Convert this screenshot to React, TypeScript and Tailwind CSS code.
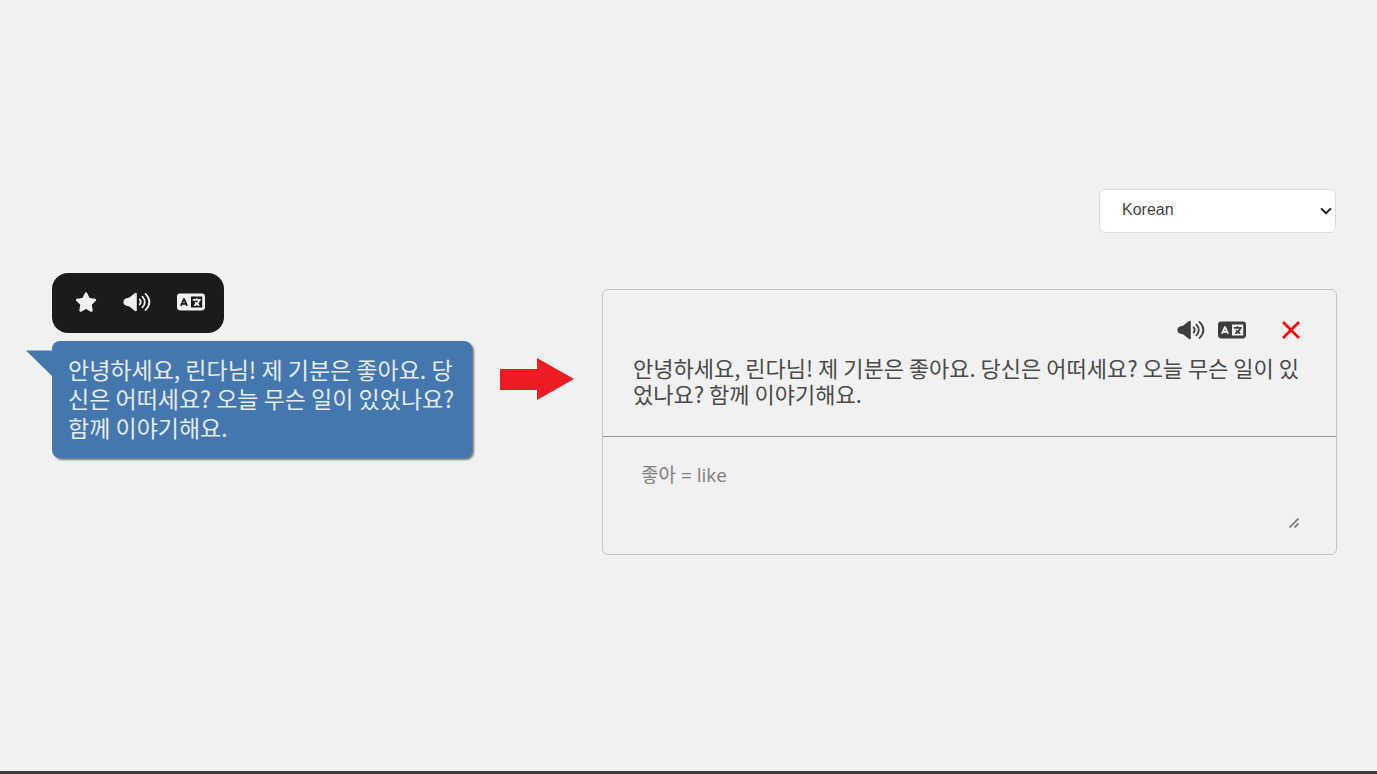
import { useState } from 'react';
import { FaLanguage, FaStar } from 'react-icons/fa6';

const message =
  '안녕하세요, 린다님! 제 기분은 좋아요. 당신은 어떠세요? 오늘 무슨 일이 있었나요? 함께 이야기해요.';

const languages = ['Korean', 'English', 'Japanese', 'Spanish'];

function SpeakerIcon() {
  return (
    <svg viewBox="0 0 28 20" className="h-5 w-7" fill="none" stroke="currentColor" strokeLinecap="round" aria-hidden="true">
      <path
        d="M3.6 6.2 C1.8 6.6 0.4 8 0.4 10 S1.8 13.4 3.6 13.8 L6.4 14.4 L12 19 Q13.8 20 13.8 18 V2 Q13.8 0 12 1 L6.4 5.6 Z"
        fill="currentColor"
        stroke="none"
      />
      <path d="M16.6 7.4 Q19 10 16.6 12.6" strokeWidth="1.7" />
      <path d="M19.4 4.6 Q24.2 10 19.4 15.4" strokeWidth="1.7" />
      <path d="M22.6 2 Q30.2 10 22.6 18" strokeWidth="1.8" />
    </svg>
  );
}

function CloseIcon() {
  return (
    <svg viewBox="0 0 18 18" className="size-[18px]" fill="none" stroke="#ff0000" strokeWidth="2.6" aria-hidden="true">
      <path d="M1 1 L17 17 M17 1 L1 17" />
    </svg>
  );
}

function Arrow() {
  return (
    <svg viewBox="0 0 74 42" className="mt-[169px] h-[42px] w-[74px] shrink-0" aria-hidden="true">
      <path d="M0 11 H37 V0 L74 21 L37 42 V32 H0 Z" fill="#ed1c24" />
    </svg>
  );
}

function ChatMessage() {
  return (
    <section className="mt-[84px] flex w-[420px] shrink-0 flex-col items-start gap-2">
      <div className="flex h-[60px] w-[172px] items-center gap-[26px] rounded-2xl bg-[#1b1b1b] pb-0.5 pl-[23px] text-[#f1f1f1]">
        <button type="button" aria-label="Save message">
          <FaStar className="size-[22px]" />
        </button>
        <button type="button" aria-label="Play message">
          <SpeakerIcon />
        </button>
        <button type="button" aria-label="Translate message">
          <FaLanguage className="size-7" />
        </button>
      </div>
      <div className="relative w-full rounded-lg bg-[#4377ad] px-4 pt-3.5 pb-4 text-[23px] leading-[29px] text-[#e6ecf3] shadow-[2px_2px_2px_#777777]">
        <svg viewBox="0 0 27 27" className="absolute top-[9px] -left-[26px] size-[27px]" aria-hidden="true">
          <path d="M0 0.5 H27 V27 Z" fill="#4377ad" />
        </svg>
        <p>{message}</p>
      </div>
    </section>
  );
}

function LanguagePicker() {
  const [language, setLanguage] = useState('Korean');
  return (
    <div className="relative mr-px w-[237px]">
      <select
        aria-label="Language"
        value={language}
        onChange={(e) => setLanguage(e.target.value)}
        className="block h-11 w-full appearance-none rounded-md border border-[#dcdcdc] bg-white pr-8 pb-0.5 pl-[22px] font-['Liberation_Sans',sans-serif] text-base text-[#444444]"
      >
        {languages.map((name) => (
          <option key={name}>{name}</option>
        ))}
      </select>
      <svg
        viewBox="0 0 12 8"
        className="pointer-events-none absolute top-[18px] right-1 h-2 w-3"
        fill="none"
        stroke="#1c1c1c"
        strokeWidth="2"
        aria-hidden="true"
      >
        <path d="M1 1.4 L6 6.2 L11 1.4" />
      </svg>
    </div>
  );
}

function NoteCard() {
  const [note, setNote] = useState('');
  return (
    <article className="w-full rounded-md border border-[#c4c4c4]">
      <div className="border-b border-[#9a9a9a] px-[30px] pt-[26px] pb-[30px]">
        <div className="flex items-center justify-end pr-1.5 text-[#3d3d3d]">
          <button type="button" aria-label="Play text">
            <SpeakerIcon />
          </button>
          <button type="button" aria-label="Translate text" className="ml-[13px]">
            <FaLanguage className="size-7" />
          </button>
          <button type="button" aria-label="Remove" className="ml-9">
            <CloseIcon />
          </button>
        </div>
        <p className="mt-2.5 text-[22px] leading-[26px] text-[#4a4a4a]">{message}</p>
      </div>
      <div className="px-[30px] py-6">
        <div className="relative">
          <textarea
            aria-label="Notes"
            placeholder="좋아 = like"
            value={note}
            onChange={(e) => setNote(e.target.value)}
            className="block h-[69px] w-full resize-y bg-transparent px-2 py-0 font-['Open_Sans','Noto_Sans_CJK_KR',sans-serif] text-[19px] leading-7 text-[#4a4a4a] placeholder:text-[#7f7f7f] [&::-webkit-resizer]:hidden"
          />
          <svg
            viewBox="0 0 10 10"
            className="pointer-events-none absolute right-[7px] bottom-0.5 size-[10px]"
            fill="none"
            stroke="#7d7d7d"
            strokeWidth="1.8"
            aria-hidden="true"
          >
            <path d="M0.5 9.5 L9.5 0.5 M5.5 9.5 L9.5 5.5" />
          </svg>
        </div>
      </div>
    </article>
  );
}

export default function App() {
  return (
    <div className="flex min-h-screen flex-col border-b-[3px] border-[#3f3e41] bg-[#f1f1f1] font-['Noto_Sans_CJK_KR','Noto_Sans',sans-serif]">
      <main className="flex flex-1 items-start gap-7 pt-[189px] pr-10 pl-[52px]">
        <ChatMessage />
        <Arrow />
        <section className="flex min-w-0 flex-1 flex-col items-end gap-14">
          <LanguagePicker />
          <NoteCard />
        </section>
      </main>
    </div>
  );
}
